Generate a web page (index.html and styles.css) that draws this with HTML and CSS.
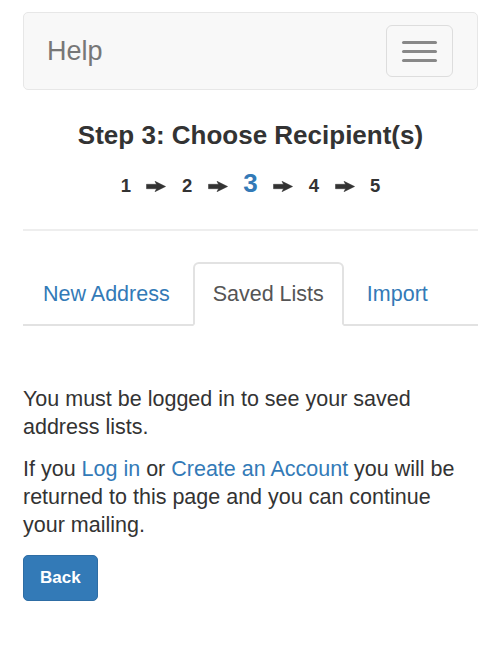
FILE: index.html
```html
<!DOCTYPE html>
<html lang="en">
<head>
<meta charset="utf-8">
<title>Help - Choose Recipients</title>
<link rel="stylesheet" href="styles.css">
</head>
<body>
<div class="page">
  <nav class="navbar">
    <a class="brand" href="#">Help</a>
    <button class="toggle" type="button" aria-label="Toggle navigation">
      <span class="bar"></span>
      <span class="bar"></span>
      <span class="bar"></span>
    </button>
  </nav>

  <h3 class="title">Step 3: Choose Recipient(s)</h3>
  <div class="steps">
    <span class="step">1</span>
    <svg class="arrow" viewBox="0 0 20 11" width="20" height="11"><polygon points="0.5,3.3 10.5,3.3 9,0.3 19.6,5.5 9,10.7 10.5,7.7 0.5,7.7"/></svg>
    <span class="step">2</span>
    <svg class="arrow" viewBox="0 0 20 11" width="20" height="11"><polygon points="0.5,3.3 10.5,3.3 9,0.3 19.6,5.5 9,10.7 10.5,7.7 0.5,7.7"/></svg>
    <span class="step current">3</span>
    <svg class="arrow" viewBox="0 0 20 11" width="20" height="11"><polygon points="0.5,3.3 10.5,3.3 9,0.3 19.6,5.5 9,10.7 10.5,7.7 0.5,7.7"/></svg>
    <span class="step">4</span>
    <svg class="arrow" viewBox="0 0 20 11" width="20" height="11"><polygon points="0.5,3.3 10.5,3.3 9,0.3 19.6,5.5 9,10.7 10.5,7.7 0.5,7.7"/></svg>
    <span class="step">5</span>
  </div>

  <hr class="divider">

  <ul class="tabs">
    <li class="tab"><a href="#">New Address</a></li>
    <li class="tab active"><a href="#">Saved Lists</a></li>
    <li class="tab"><a href="#">Import</a></li>
  </ul>

  <div class="msg">
    <p>You must be logged in to see your saved address lists.</p>
    <p>If you <a href="#">Log in</a> or <a href="#">Create an Account</a> you will be returned to this page and you can continue your mailing.</p>
    <button class="btn" type="button">Back</button>
  </div>
</div>
</body>
</html>
```

FILE: styles.css
```css
html, body {
  margin: 0;
  padding: 0;
  background: #fff;
}

body {
  font-family: "Liberation Sans", Arial, Helvetica, sans-serif;
  font-size: 21.5px;
  line-height: 28px;
  color: #333;
}

a {
  color: #337ab7;
  text-decoration: none;
}

.page {
  padding: 12px 14px 0 23px;
}

/* navbar */
.navbar {
  height: 76px;
  border: 1px solid #e7e7e7;
  border-radius: 5px;
  background: #f8f8f8;
  display: flex;
  align-items: center;
  justify-content: space-between;
  padding: 0 24px 0 23px;
}

.brand {
  font-size: 27px;
  line-height: 30px;
  color: #777;
}

.toggle {
  width: 67px;
  height: 52px;
  box-sizing: border-box;
  border: 1px solid #ddd;
  border-radius: 6px;
  background: transparent;
  padding: 0 15px;
  display: flex;
  flex-direction: column;
  justify-content: center;
  gap: 6px;
}

.bar {
  display: block;
  width: 35px;
  height: 3px;
  border-radius: 1.5px;
  background: #888;
}

/* heading */
.title {
  margin: 30px 0 18px;
  font-size: 26px;
  line-height: 30px;
  font-weight: bold;
  text-align: center;
  color: #333;
}

.steps {
  display: flex;
  justify-content: center;
  align-items: baseline;
  gap: 15.5px;
  height: 30px;
}

.step {
  font-size: 18.5px;
  line-height: 30px;
  font-weight: bold;
  color: #333;
}

.step.current {
  font-size: 26px;
  color: #337ab7;
}

.arrow {
  display: block;
  fill: #333;
  stroke: #333;
  stroke-width: 0.5;
  stroke-linejoin: round;
}

.divider {
  margin: 31px 0 0;
  border: 0;
  border-top: 2px solid #eee;
  height: 0;
}

/* tabs */
.tabs {
  list-style: none;
  margin: 31px 0 0;
  padding: 0;
  display: flex;
  border-bottom: 2px solid #e2e2e2;
}

.tab {
  margin: 0 3px -2px 0;
}

.tab a {
  display: block;
  padding: 15px 18px;
  line-height: 30px;
  border: 2px solid transparent;
  border-radius: 6px 6px 0 0;
}

.tab.active a {
  color: #555;
  background: #fff;
  border-color: #e2e2e2;
  border-bottom-color: transparent;
}

/* message */
.msg {
  margin-top: 59px;
  max-width: 440px;
}

.msg p {
  margin: 0 0 14px;
}

.btn {
  margin-top: 2px;
  font-family: "Liberation Sans", Arial, Helvetica, sans-serif;
  font-size: 17px;
  font-weight: bold;
  line-height: 28px;
  color: #fff;
  background: #337ab7;
  border: 1px solid #2e6da4;
  border-radius: 5px;
  padding: 8px 16px;
}
```
